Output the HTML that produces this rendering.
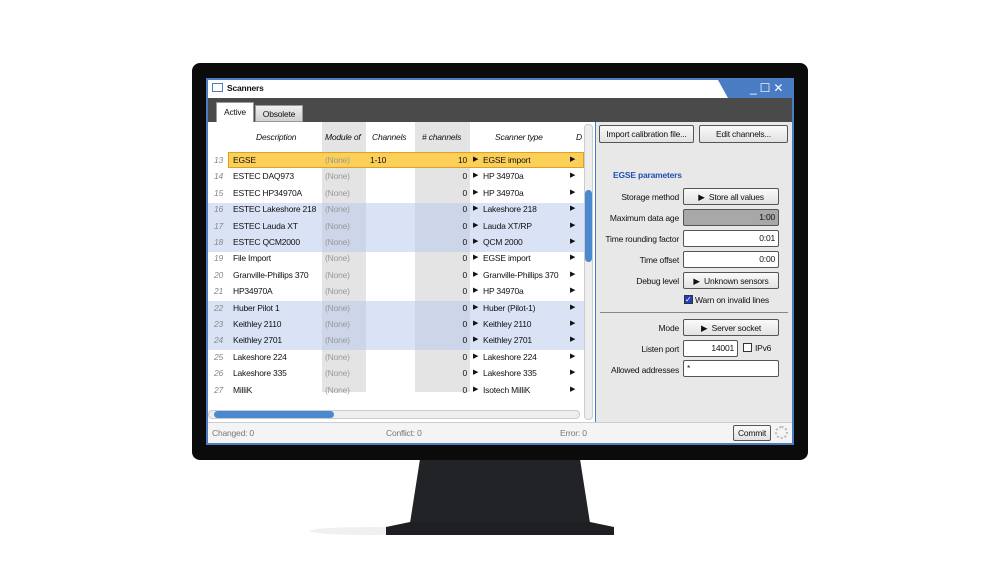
<!DOCTYPE html>
<html><head><meta charset="utf-8"><style>
*{margin:0;padding:0;box-sizing:border-box}
body{width:1000px;height:563px;background:#fff;position:relative;overflow:hidden;font-family:"Liberation Sans",sans-serif;font-size:8.5px;color:#111;letter-spacing:-0.2px}
.a{position:absolute}
.row{position:absolute;left:0;width:376px;height:16px;line-height:16px}
.row span{position:absolute;white-space:nowrap}
.n{left:6px;width:14px;color:#888;font-style:italic}
.btn{position:absolute;background:linear-gradient(#fafafa,#e2e2e2);border:1px solid #555;border-radius:2px;text-align:center;line-height:16px;font-size:8.5px}
.lbl{position:absolute;right:113px;text-align:right;font-size:8.5px;white-space:nowrap}
.inp{position:absolute;left:87px;width:96px;height:17px;background:#fff;border:1px solid #555;border-radius:2px;text-align:right;padding-right:3px;line-height:15px}
</style></head><body>
<div class="a" style="left:0;top:0;width:1000px;height:563px">
<svg width="1000" height="563" class="a" style="left:0;top:0">
<ellipse cx="370" cy="531" rx="60" ry="4" fill="#f0f0f0"/>
<polygon points="420,459 580,459 590,523 410,523" fill="#222327"/>
<polygon points="410,522 590,522 614,527 614,535 386,535 386,527" fill="#1e1f22"/>
<rect x="192" y="63" width="616" height="397" rx="8" fill="#0b0b0b"/>
</svg></div>
<div class="a" style="left:206px;top:78px;width:588px;height:367px;background:#4a7cc4;"></div>
<div class="a" style="left:208px;top:80px;width:584px;height:18px;background:#fff"></div>
<div class="a" style="left:700px;top:80px;width:92px;height:18px;background:#4a7cc4;clip-path:polygon(18px 0,100% 0,100% 100%,28px 100%)"></div>
<div class="a" style="left:707px;top:80px;width:10px;height:18px;background:#fff;clip-path:polygon(0 0,4px 0,10px 100%,6px 100%)"></div>
<div class="a" style="left:212px;top:83px;width:11px;height:9px;border:1px solid #4a7cc4"></div>
<div class="a" style="left:227px;top:83px;font-weight:bold">Scanners</div>
<div class="a" style="left:750px;top:80px;color:#fff;font-size:12px;line-height:16px;letter-spacing:3px">_☐✕</div>
<div class="a" style="left:208px;top:98px;width:584px;height:24px;background:#4a4a4a"></div>
<div class="a" style="left:216px;top:102px;width:38px;height:22px;background:#fff;border:1px solid #999;border-bottom:none;line-height:18px;text-align:center">Active</div>
<div class="a" style="left:255px;top:105px;width:48px;height:17px;background:linear-gradient(#f0f0f0,#d0d0d0);border:1px solid #999;line-height:16px;text-align:center">Obsolete</div>
<div class="a" style="left:208px;top:122px;width:387px;height:300px;background:#fff;overflow:hidden">
 <div class="a" style="left:114px;top:0;width:44px;height:270px;background:#e4e4e4"></div>
 <div class="a" style="left:207px;top:0;width:55px;height:270px;background:#e4e4e4"></div>
 <div class="a" style="left:0;top:8px;width:376px;height:14px;font-style:italic;line-height:14px">
  <span class="a" style="left:48px">Description</span><span class="a" style="left:117px">Module of</span><span class="a" style="left:164px">Channels</span><span class="a" style="left:214px">&#35; channels</span><span class="a" style="left:287px">Scanner type</span><span class="a" style="left:368px">D</span></div>
 <div class="a" style="left:0;top:81px;width:376px;height:49px;background:rgba(180,200,235,.5)"></div>
 <div class="a" style="left:0;top:179px;width:376px;height:49px;background:rgba(180,200,235,.5)"></div>
 <div class="a" style="left:20px;top:30px;width:356px;height:16px;background:#fbcf58;border:1px solid #e0a020"></div>
 <div id="rows"></div>
 <div class="a" style="left:376px;top:2px;width:9px;height:296px;background:#eee;border:1px solid #ccc;border-radius:4px"></div>
 <div class="a" style="left:377px;top:68px;width:7px;height:72px;background:#4a88d0;border-radius:4px"></div>
 <div class="a" style="left:0;top:288px;width:372px;height:9px;background:#eee;border:1px solid #ccc;border-radius:4px"></div>
 <div class="a" style="left:6px;top:289px;width:120px;height:7px;background:#4a88d0;border-radius:4px"></div>
</div>
<div class="a" style="left:596px;top:122px;width:196px;height:300px;background:#e8e8e8">
 <div class="btn" style="left:3px;top:3px;width:95px;height:18px">Import calibration file...</div>
 <div class="btn" style="left:103px;top:3px;width:89px;height:18px">Edit channels...</div>
 <div class="a" style="left:17px;top:48px;color:#2050b0;font-weight:bold">EGSE parameters</div>
 <div class="lbl" style="top:70px">Storage method</div><div class="btn" style="left:87px;top:66px;width:96px;height:17px">&#9654;&nbsp;&nbsp;Store all values</div>
 <div class="lbl" style="top:91px">Maximum data age</div><div class="inp" style="top:87px;background:#a8a8a8">1:00</div>
 <div class="lbl" style="top:112px">Time rounding factor</div><div class="inp" style="top:108px">0:01</div>
 <div class="lbl" style="top:133px">Time offset</div><div class="inp" style="top:129px">0:00</div>
 <div class="lbl" style="top:154px">Debug level</div><div class="btn" style="left:87px;top:150px;width:96px;height:17px">&#9654;&nbsp;&nbsp;Unknown sensors</div>
 <div class="a" style="left:88px;top:173px;width:9px;height:9px;background:#2040c0;border:1px solid #333;color:#fff;font-size:8px;line-height:7px">✓</div>
 <div class="a" style="left:99px;top:173px">Warn on invalid lines</div>
 <div class="a" style="left:4px;top:190px;width:188px;height:1px;background:#888"></div>
 <div class="lbl" style="top:201px">Mode</div><div class="btn" style="left:87px;top:197px;width:96px;height:17px">&#9654;&nbsp;&nbsp;Server socket</div>
 <div class="lbl" style="top:222px">Listen port</div><div class="inp" style="top:218px;width:55px">14001</div>
 <div class="a" style="left:147px;top:221px;width:9px;height:9px;border:1px solid #333;background:#fff"></div><div class="a" style="left:159px;top:221px">IPv6</div>
 <div class="lbl" style="top:243px">Allowed addresses</div><div class="inp" style="top:238px;text-align:left;padding-left:3px">*</div>
</div>
<div class="a" style="left:208px;top:422px;width:584px;height:21px;background:#f4f4f4;border-top:1px solid #ccc;color:#777;line-height:20px">
 <span class="a" style="left:4px">Changed: 0</span><span class="a" style="left:178px">Conflict: 0</span><span class="a" style="left:352px">Error: 0</span>
 <div class="btn" style="left:525px;top:2px;width:38px;height:16px;color:#111;line-height:14px">Commit</div>
 <div class="a" style="left:567px;top:3px;width:13px;height:13px;border:2px dotted #bbb;border-radius:50%"></div>
</div>
<script>
var d=[[13,"EGSE","1-10",10,"EGSE import"],[14,"ESTEC DAQ973","",0,"HP 34970a"],[15,"ESTEC HP34970A","",0,"HP 34970a"],[16,"ESTEC Lakeshore 218","",0,"Lakeshore 218"],[17,"ESTEC Lauda XT","",0,"Lauda XT/RP"],[18,"ESTEC QCM2000","",0,"QCM 2000"],[19,"File Import","",0,"EGSE import"],[20,"Granville-Phillips 370","",0,"Granville-Phillips 370"],[21,"HP34970A","",0,"HP 34970a"],[22,"Huber Pilot 1","",0,"Huber (Pilot-1)"],[23,"Keithley 2110","",0,"Keithley 2110"],[24,"Keithley 2701","",0,"Keithley 2701"],[25,"Lakeshore 224","",0,"Lakeshore 224"],[26,"Lakeshore 335","",0,"Lakeshore 335"],[27,"MilliK","",0,"Isotech MilliK"]];
var h="";d.forEach(function(r,i){h+='<div class="row" style="top:'+(30+i*16.4)+'px"><span class="n">'+r[0]+'</span><span style="left:25px">'+r[1]+'</span><span style="left:117px;color:#999">(None)</span><span style="left:162px">'+r[2]+'</span><span style="left:207px;width:52px;text-align:right">'+r[3]+'</span><span style="left:265px;font-size:7px">&#9654;</span><span style="left:275px">'+r[4]+'</span><span style="left:362px;font-size:7px">&#9654;</span></div>';});
document.getElementById("rows").innerHTML=h;
</script>
</body></html>
